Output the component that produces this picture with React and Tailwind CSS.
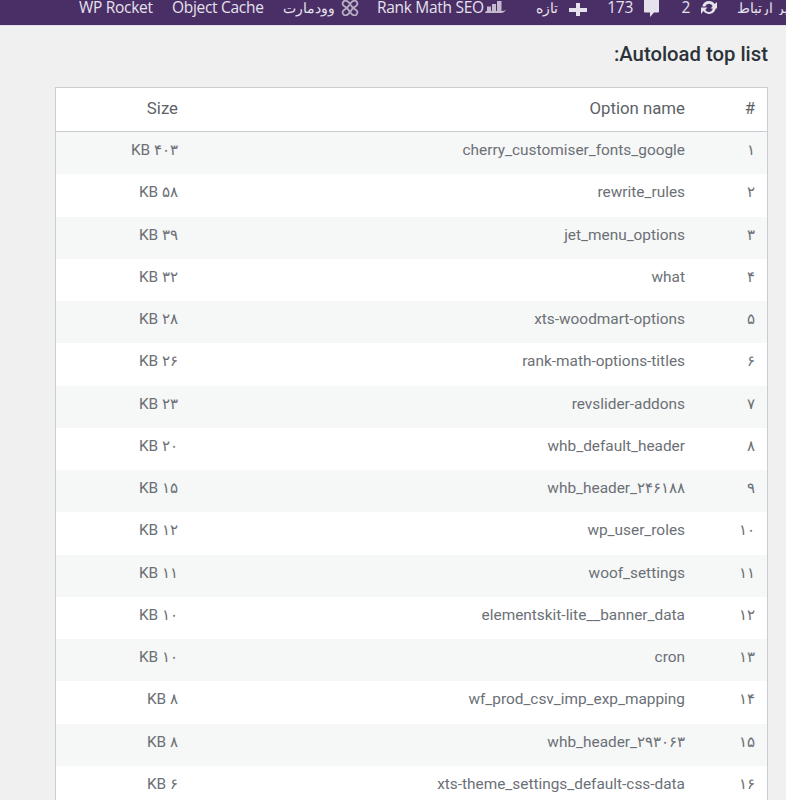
const rows = [
  ['۱', 'cherry_customiser_fonts_google', '۴۰۳ KB'],
  ['۲', 'rewrite_rules', '۵۸ KB'],
  ['۳', 'jet_menu_options', '۳۹ KB'],
  ['۴', 'what', '۳۲ KB'],
  ['۵', 'xts-woodmart-options', '۲۸ KB'],
  ['۶', 'rank-math-options-titles', '۲۶ KB'],
  ['۷', 'revslider-addons', '۲۳ KB'],
  ['۸', 'whb_default_header', '۲۰ KB'],
  ['۹', 'whb_header_۲۴۶۱۸۸', '۱۵ KB'],
  ['۱۰', 'wp_user_roles', '۱۲ KB'],
  ['۱۱', 'woof_settings', '۱۱ KB'],
  ['۱۲', 'elementskit-lite__banner_data', '۱۰ KB'],
  ['۱۳', 'cron', '۱۰ KB'],
  ['۱۴', 'wf_prod_csv_imp_exp_mapping', '۸ KB'],
  ['۱۵', 'whb_header_۲۹۳۰۶۳', '۸ KB'],
  ['۱۶', 'xts-theme_settings_default-css-data', '۶ KB'],
];

function TopBar() {
  return (
    <div dir="rtl" className="h-[25px] bg-[#4a2f66] border-b border-[#e4e0ea] box-content flex items-start overflow-hidden whitespace-nowrap text-[15.5px] leading-[15px] text-[#e6e2ec] font-['Open_Sans',sans-serif] tracking-[-0.3px]">
      <div className="w-[49px] shrink-0 h-[15px] overflow-hidden">
        <span className="block mr-[-18px] text-[14px] tracking-normal">مدیر ارتباط</span>
      </div>
      <svg className="ml-[8px] mr-[17px] shrink-0" width="22" height="15" viewBox="0 0 22 15" fill="#e6e2ec">
        <path d="M11 1a6.800 6.800 0 0 1 5.700 3L19 2v6.500h-6.500l2.200-2.200A3.900 3.900 0 0 0 7.300 6.500H4.300A6.900 6.900 0 0 1 11 1zM3 14V7.500h6.500L7.300 9.700a3.900 3.900 0 0 0 7.400-1.200h3A6.900 6.900 0 0 1 5.300 11z" />
      </svg>
      <span className="w-[9px] shrink-0">2</span>
      <svg className="mr-[21px] ml-[10px] shrink-0" width="17" height="18" viewBox="0 0 17 18" fill="#e6e2ec">
        <path d="M1 0h15v11.500a1 1 0 0 1-1 1h-4L7 17v-4.500H2a1 1 0 0 1-1-1z" />
      </svg>
      <span className="w-[26px] shrink-0">173</span>
      <svg className="mr-[20px] ml-[11px] shrink-0" width="18" height="18" viewBox="0 0 18 18" fill="#e6e2ec">
        <path d="M7 3h4v5h7v4h-7v4H7v-4H0V8h7z" />
      </svg>
      <span className="w-[22px] shrink-0 text-[14px] tracking-normal">تازه</span>
      <svg className="mr-[29px] shrink-0" width="23" height="15" viewBox="0 0 23 15" fill="#c4bacf">
        <path d="M22 9.500c-1 2.500-3 3.500-5 3.500H1l1-2h15c2 0 4-.5 5-1.500zM13 1h4.500v10H13zM8 4h4v7H8zM3 6.500h4V11H3z" />
      </svg>
      <span dir="ltr" className="w-[107px] shrink-0">Rank Math SEO</span>
      <svg className="mr-[18px] ml-[6px] shrink-0" width="18" height="16" viewBox="0 0 18 16" fill="none" stroke="#b9aec6" strokeWidth="1.800">
        <path d="M3 1c-2 2-2 3.500 0 5l3 2-3 2c-2 1.500-2 3 0 5 2 1 4 0 6-3 2 3 4 4 6 3 2-2 2-3.500 0-5l-3-2 3-2c2-1.500 2-3 0-5-2-1-4 0-6 3-2-3-4-4-6-3zM6 8l3-4 3 4-3 4z" />
      </svg>
      <span className="w-[51px] shrink-0 text-[14px] tracking-normal">وودمارت</span>
      <span dir="ltr" className="mr-[20px] w-[92px] shrink-0">Object Cache</span>
      <span dir="ltr" className="mr-[19px] w-[74px] shrink-0">WP Rocket</span>
    </div>
  );
}

export default function App() {
  return (
    <div className="w-[786px] h-[800px] overflow-hidden bg-[#f0f0f1] font-['Roboto',sans-serif]">
      <TopBar />
      <h2 dir="rtl" className="mt-[15px] mr-[18px] text-[20.300px] leading-[26px] font-medium text-[#2c3338]">Autoload top list:</h2>
      <div dir="rtl" className="mt-[20px] ml-[55px] mr-[18px] border border-[#c9cdd1] bg-white">
        <div className="flex h-[44px] items-center pb-[2px] border-b border-[#c9cdd1] text-[16.800px] text-[#5c6268]">
          <div className="w-[82px] pr-[12px] shrink-0">#</div>
          <div className="flex-1">Option name</div>
          <div className="w-[122px] shrink-0">Size</div>
        </div>
        {rows.map((row, i) => (
          <div key={i} className={`flex h-[42.25px] items-center pb-[5px] text-[15.400px] text-[#6b7076] ${i % 2 === 0 ? 'bg-[#f6f7f7]' : 'bg-white'}`}>
            <div className="w-[82px] pr-[12px] shrink-0">{row[0]}</div>
            <div className="flex-1">{row[1]}</div>
            <div className="w-[122px] shrink-0">{row[2]}</div>
          </div>
        ))}
      </div>
    </div>
  );
}
